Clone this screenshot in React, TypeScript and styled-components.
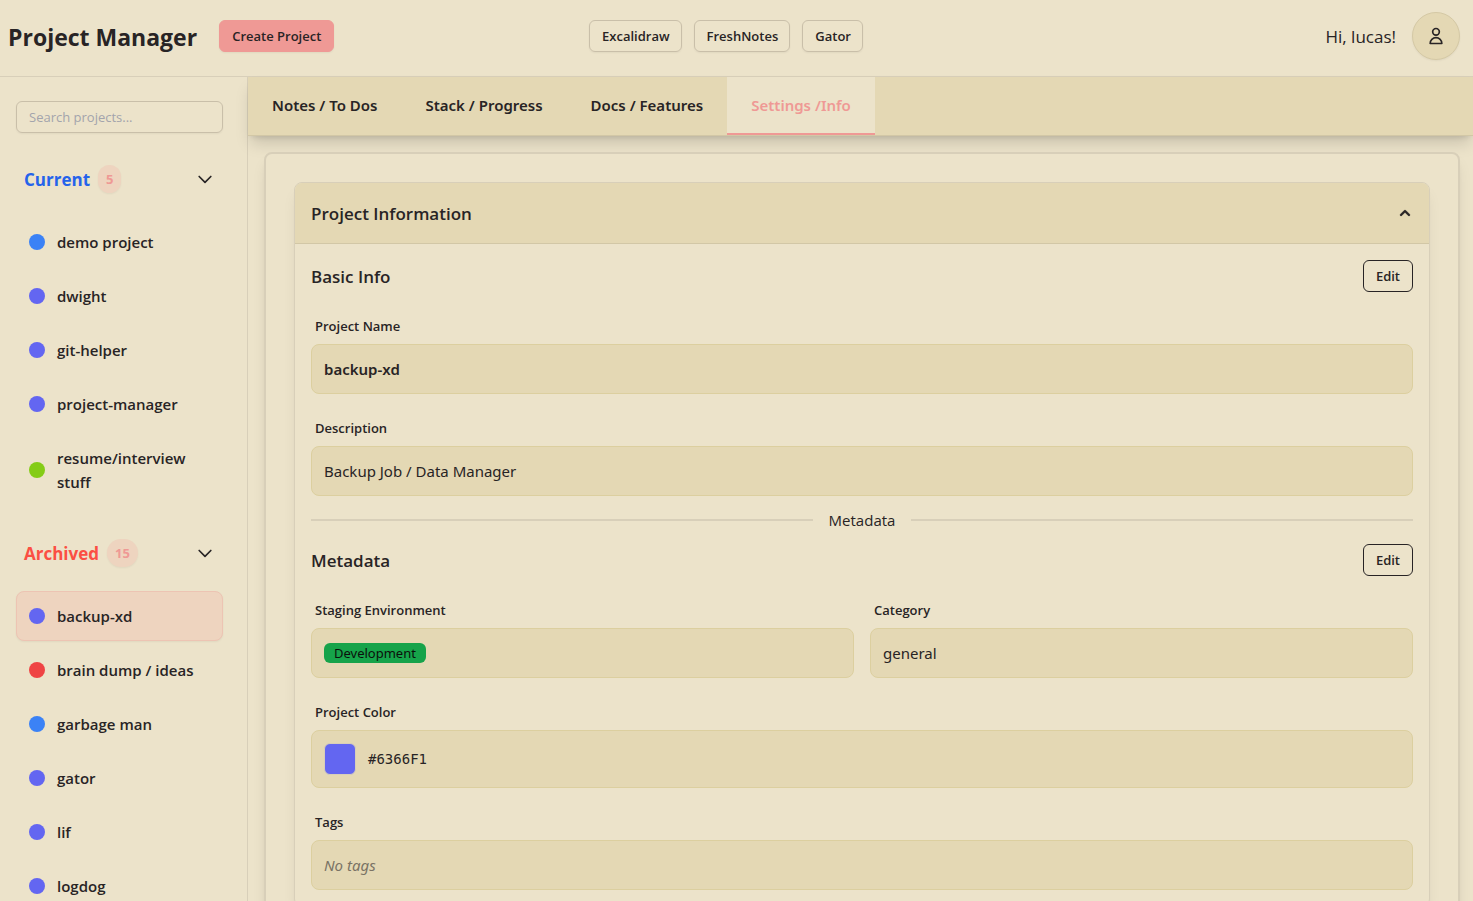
import React from "react";
import styled, { createGlobalStyle, css } from "styled-components";

const ink = "#282425";
const base = "#ece3ca";
const sand = "#e4d8b4";
const primary = "#ef9995";
const line = "#d8cfb9";
const wideFont = `"Noto Sans", "Open Sans", sans-serif`;

const GlobalStyle = createGlobalStyle`
  *, *::before, *::after { box-sizing: border-box; }
  body { margin: 0; background: ${base}; }
  body, button, input { font-family: "Open Sans", "Noto Sans", sans-serif; color: ${ink}; }
  h1, h3, ul { margin: 0; padding: 0; }
`;

const Page = styled.div`
  height: 100vh;
  display: flex;
  flex-direction: column;
  overflow: hidden;
  font-size: 15px;
  line-height: 24px;
`;

const Header = styled.header`
  flex: none;
  display: flex;
  align-items: center;
  height: 77px;
  padding: 0 13px 4px 8px;
  border-bottom: 1px solid ${line};
`;

const HeaderStart = styled.div`
  flex: 1;
  display: flex;
  align-items: center;
  gap: 22px;
`;

const HeaderLinks = styled.nav`
  display: flex;
  gap: 12px;
  margin-right: 16px;
`;

const HeaderEnd = styled.div`
  flex: 1;
  display: flex;
  align-items: center;
  justify-content: flex-end;
  gap: 16px;
`;

const Greeting = styled.span`
  padding-top: 2px;
  font-size: 17px;
`;

const Title = styled.h1`
  && { padding-top: 2px; }
  font-size: 23px;
  line-height: 32px;
  font-weight: 700;
  white-space: nowrap;
`;

const Button = styled.button<{ $kind: "primary" | "soft" | "outline" }>`
  height: 32px;
  padding: 0 12px;
  border: 1px solid #c9bfa9;
  border-radius: 6px;
  background: transparent;
  font-size: 13px;
  line-height: 20px;
  font-weight: 600;
  white-space: nowrap;
  cursor: pointer;
  ${(p) => p.$kind === "soft" && css`
    padding: 0 11px 0 12px;
    box-shadow: 0 1px 2px rgba(0, 0, 0, 0.05);
  `}
  ${(p) =>
    p.$kind === "primary" &&
    css`
      background: ${primary};
      border-color: ${primary};
      box-shadow: 0 1px 2px rgba(0, 0, 0, 0.05);
    `}
  ${(p) => p.$kind === "outline" && css`border-color: ${ink};`}
`;

const Avatar = styled.button`
  display: grid;
  place-items: center;
  width: 48px;
  height: 48px;
  padding: 0;
  border: 1px solid #d5c9a5;
  border-radius: 50%;
  background: ${sand};
  box-shadow: 0 1px 2px rgba(0, 0, 0, 0.05);
`;

const Body = styled.div`
  flex: 1;
  min-height: 0;
  display: flex;
`;

const Sidebar = styled.aside`
  flex: none;
  width: 248px;
  padding: 24px 24px 0 16px;
  border-right: 1px solid ${line};
  overflow: hidden;
`;

const Search = styled.input`
  display: block;
  width: 100%;
  height: 32px;
  padding: 0 12px;
  border: 1px solid #c9bfa9;
  border-radius: 6px;
  background: transparent;
  font-size: 13px;
  box-shadow: 0 1px 2px rgba(0, 0, 0, 0.05);
  &::placeholder { color: #a3a4ac; opacity: 1; }
`;

const GroupHeader = styled.button`
  display: flex;
  align-items: center;
  width: 100%;
  height: 44px;
  margin: 24px 0 16px;
  padding: 0 8px;
  border: 0;
  background: none;
  text-align: left;
`;

const GroupName = styled.span<{ $color: string }>`
  padding-top: 2px;
  color: ${(p) => p.$color};
  font-size: 17px;
  line-height: 28px;
  font-weight: 700;
`;

const Count = styled.span`
  margin: 0 auto 0 8px;
  padding: 0 8px;
  border-radius: 14px;
  background: #eed4bf;
  color: ${primary};
  font-size: 13px;
  line-height: 28px;
  font-weight: 700;
  box-shadow: 0 1px 2px rgba(0, 0, 0, 0.05);
`;

const ProjectList = styled.ul`
  display: flex;
  flex-direction: column;
  gap: 4px;
  list-style: none;
`;

const ProjectButton = styled.button<{ $active?: boolean }>`
  display: flex;
  align-items: center;
  gap: 12px;
  width: 100%;
  padding: 12px;
  border: 1px solid ${(p) => (p.$active ? "#edc4b3" : "transparent")};
  border-radius: 8px;
  background: ${(p) => (p.$active ? "#eed4bf" : "transparent")};
  box-shadow: ${(p) => (p.$active ? "0 1px 2px rgba(0, 0, 0, 0.05)" : "none")};
  font-size: 15px;
  line-height: 24px;
  font-weight: 600;
  text-align: left;
`;

const Dot = styled.span<{ $color: string }>`
  flex: none;
  width: 16px;
  height: 16px;
  border-radius: 50%;
  background: ${(p) => p.$color};
`;

const Main = styled.main`
  flex: 1;
  min-width: 0;
  display: flex;
  flex-direction: column;
`;

const Tabs = styled.nav`
  flex: none;
  display: flex;
  height: 59px;
  border-bottom: 1px solid #d2c7a6;
  background: ${sand};
  box-shadow: 0 10px 15px -3px rgba(0, 0, 0, 0.15), 0 4px 6px -4px rgba(0, 0, 0, 0.15);
`;

const Tab = styled.button<{ $active?: boolean }>`
  padding: 0 24px;
  border: 0;
  border-bottom: 2px solid ${(p) => (p.$active ? primary : "transparent")};
  background: ${(p) => (p.$active ? base : "transparent")};
  color: ${(p) => (p.$active ? primary : ink)};
  font-family: ${wideFont};
  font-size: 15px;
  line-height: 24px;
  font-weight: 600;
  white-space: nowrap;
`;

const Scroll = styled.div`
  flex: 1;
  min-height: 0;
  padding: 16px 13px 16px 16px;
  overflow: hidden;
`;

const Panel = styled.section`
  padding: 28px;
  border: 2px solid ${line};
  border-radius: 8px;
  background: ${base};
  box-shadow: 0 10px 15px -3px rgba(0, 0, 0, 0.1), 0 4px 6px -4px rgba(0, 0, 0, 0.1);
`;

const Card = styled.div`
  border: 1px solid ${line};
  border-radius: 8px;
  background: ${base};
  box-shadow: 0 10px 15px -3px rgba(0, 0, 0, 0.08), 0 4px 6px -4px rgba(0, 0, 0, 0.08);
`;

const CardHeader = styled.button`
  display: flex;
  align-items: center;
  justify-content: space-between;
  width: 100%;
  height: 61px;
  padding: 0 14px 0 16px;
  border: 0;
  border-bottom: 1px solid #d2c7a6;
  border-radius: 7px 7px 0 0;
  background: ${sand};
`;

const SectionTitle = styled.span`
  && { padding-top: 2px; }
  font-size: 17px;
  line-height: 28px;
  font-weight: 600;
`;

const CardBody = styled.div`
  display: flex;
  flex-direction: column;
  gap: 16px;
  padding: 16px;
`;

const SectionHead = styled.div`
  display: flex;
  align-items: center;
  justify-content: space-between;
  height: 32px;
`;

const Divider = styled.div`
  display: flex;
  align-items: center;
  gap: 16px;
  height: 16px;
  &::before, &::after {
    content: "";
    flex: 1;
    height: 2px;
    background: ${line};
  }
`;

const Columns = styled.div`
  display: grid;
  grid-template-columns: 1fr 1fr;
  gap: 16px;
`;

const FieldLabel = styled.div`
  padding: 8px 4px;
  font-size: 13px;
  line-height: 20px;
  font-weight: 600;
`;

const FieldValue = styled.div<{ $tone?: "strong" | "empty" }>`
  display: flex;
  align-items: center;
  gap: 12px;
  padding: 12px;
  border: 1px solid #dccf9f;
  border-radius: 8px;
  background: ${sand};
  min-height: 50px;
  font-family: ${wideFont};
  ${(p) => p.$tone === "strong" && css`font-weight: 600;`}
  ${(p) => p.$tone === "empty" && css`font-style: italic; color: #7a7365;`}
`;

const StageBadge = styled.span`
  padding: 0 10px;
  border-radius: 6px;
  background: #16a34a;
  color: #0b0f0b;
  font-size: 13px;
  line-height: 20px;
`;

const Swatch = styled.span`
  width: 32px;
  height: 32px;
  border: 1px solid ${line};
  border-radius: 6px;
  background: #6366f1;
`;

const Code = styled.code`
  font-family: "DejaVu Sans Mono", monospace;
  font-size: 14px;
`;

const ChevronDown = () => (
  <svg width="20" height="20" viewBox="0 0 24 24" fill="none" stroke={ink} strokeWidth="2" strokeLinecap="round" strokeLinejoin="round" aria-hidden="true">
    <path d="M19 9l-7 7-7-7" />
  </svg>
);

const CaretUp = () => (
  <svg width="20" height="20" viewBox="0 0 20 20" fill={ink} stroke={ink} strokeWidth="0.3" aria-hidden="true">
    <path d="M14.707 12.707a1 1 0 01-1.414 0L10 9.414l-3.293 3.293a1 1 0 01-1.414-1.414l4-4a1 1 0 011.414 0l4 4a1 1 0 010 1.414z" />
  </svg>
);

const UserIcon = () => (
  <svg width="20" height="20" viewBox="0 0 24 24" fill="none" stroke={ink} strokeWidth="2" strokeLinecap="round" strokeLinejoin="round" aria-hidden="true">
    <path d="M16 7a4 4 0 11-8 0 4 4 0 018 0zM12 14a7 7 0 00-7 7h14a7 7 0 00-7-7z" />
  </svg>
);

type Project = { name: string; color: string; active?: boolean };

const indigo = "#6366f1";
const current: Project[] = [
  { name: "demo project", color: "#3b82f6" },
  { name: "dwight", color: indigo },
  { name: "git-helper", color: indigo },
  { name: "project-manager", color: indigo },
  { name: "resume/interview stuff", color: "#84cc16" },
];
const archived: Project[] = [
  { name: "backup-xd", color: indigo, active: true },
  { name: "brain dump / ideas", color: "#ef4444" },
  { name: "garbage man", color: "#3b82f6" },
  { name: "gator", color: indigo },
  { name: "lif", color: indigo },
  { name: "logdog", color: indigo },
];
const tabs = ["Notes / To Dos", "Stack / Progress", "Docs / Features", "Settings /Info"];

const Group = (p: { name: string; color: string; count: number; projects: Project[] }) => (
  <section>
    <GroupHeader aria-expanded="true">
      <GroupName $color={p.color}>{p.name}</GroupName>
      <Count>{p.count}</Count>
      <ChevronDown />
    </GroupHeader>
    <ProjectList>
      {p.projects.map((item) => (
        <li key={item.name}>
          <ProjectButton $active={item.active}>
            <Dot $color={item.color} />
            <span>{item.name}</span>
          </ProjectButton>
        </li>
      ))}
    </ProjectList>
  </section>
);

const Field = (p: { label: string; tone?: "strong" | "empty"; children: React.ReactNode }) => (
  <div>
    <FieldLabel>{p.label}</FieldLabel>
    <FieldValue $tone={p.tone}>{p.children}</FieldValue>
  </div>
);

export default function App() {
  return (
    <Page>
      <GlobalStyle />
      <Header>
        <HeaderStart>
          <Title>Project Manager</Title>
          <Button $kind="primary">Create Project</Button>
        </HeaderStart>
        <HeaderLinks>
          <Button $kind="soft">Excalidraw</Button>
          <Button $kind="soft">FreshNotes</Button>
          <Button $kind="soft">Gator</Button>
        </HeaderLinks>
        <HeaderEnd>
          <Greeting>Hi, lucas!</Greeting>
          <Avatar aria-label="Account">
            <UserIcon />
          </Avatar>
        </HeaderEnd>
      </Header>
      <Body>
        <Sidebar>
          <Search type="text" placeholder="Search projects..." aria-label="Search projects" />
          <Group name="Current" color="#2563eb" count={5} projects={current} />
          <Group name="Archived" color="#fb4f43" count={15} projects={archived} />
        </Sidebar>
        <Main>
          <Tabs>
            {tabs.map((t, i) => (
              <Tab key={t} $active={i === 3}>
                {t}
              </Tab>
            ))}
          </Tabs>
          <Scroll>
            <Panel>
              <Card>
                <CardHeader aria-expanded="true">
                  <SectionTitle>Project Information</SectionTitle>
                  <CaretUp />
                </CardHeader>
                <CardBody>
                  <SectionHead>
                    <SectionTitle as="h3">Basic Info</SectionTitle>
                    <Button $kind="outline">Edit</Button>
                  </SectionHead>
                  <Field label="Project Name" tone="strong">backup-xd</Field>
                  <Field label="Description">Backup Job / Data Manager</Field>
                  <Divider>Metadata</Divider>
                  <SectionHead>
                    <SectionTitle as="h3">Metadata</SectionTitle>
                    <Button $kind="outline">Edit</Button>
                  </SectionHead>
                  <Columns>
                    <Field label="Staging Environment">
                      <StageBadge>Development</StageBadge>
                    </Field>
                    <Field label="Category">general</Field>
                  </Columns>
                  <Field label="Project Color">
                    <Swatch />
                    <Code>#6366F1</Code>
                  </Field>
                  <Field label="Tags" tone="empty">No tags</Field>
                </CardBody>
              </Card>
            </Panel>
          </Scroll>
        </Main>
      </Body>
    </Page>
  );
}
